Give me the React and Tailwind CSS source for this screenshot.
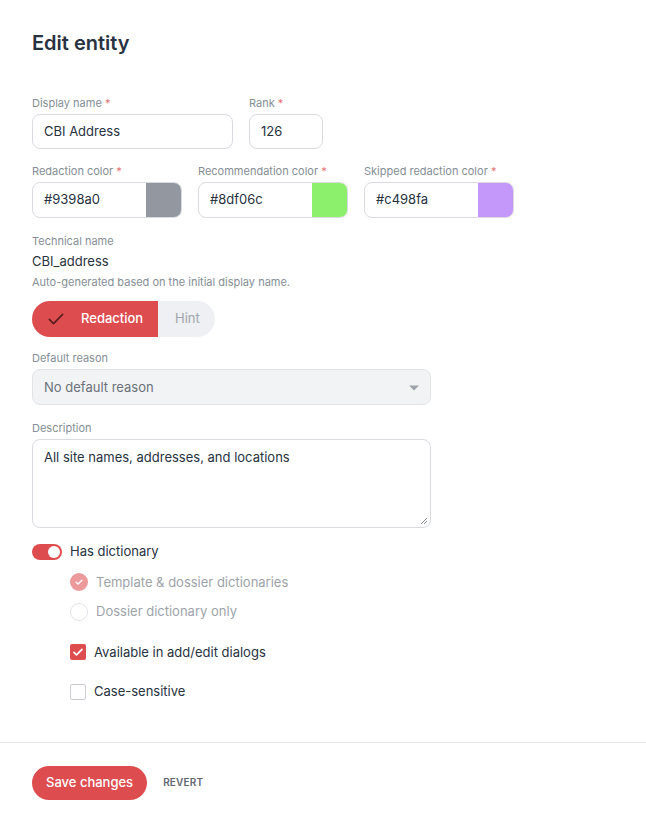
import React from "react";

const Label = ({ children, req }) => (
  <div className="text-[11px] leading-[14px] text-[#868e96] mb-[4px]">
    {children}
    {req && <span className="text-[#e57373]"> *</span>}
  </div>
);

const ColorField = ({ label, value, color }) => (
  <div className="w-[150px]">
    <Label req>{label}</Label>
    <div className="flex h-[36px] rounded-[8px] border border-[#d9dbe0] overflow-hidden">
      <div className="flex-1 flex items-center pl-[11px] text-[13px] text-[#283241]">{value}</div>
      <div className="w-[35px] h-full" style={{ background: color }} />
    </div>
  </div>
);

export default function App() {
  return (
    <div className="min-h-[823px] bg-white font-['Inter',sans-serif] text-[#283241]">
      <div className="px-8 pt-[30px]">
        <h1 className="text-[20px] font-semibold leading-[26px] text-[#283241]">Edit entity</h1>

        <div className="flex gap-4 mt-[40px]">
          <div className="w-[201px]">
            <Label req>Display name</Label>
            <div className="h-[35px] rounded-[8px] border border-[#d9dbe0] flex items-center pl-[11px] pt-[1px] text-[13px]">CBI Address</div>
          </div>
          <div className="w-[74px]">
            <Label req>Rank</Label>
            <div className="h-[35px] rounded-[8px] border border-[#d9dbe0] flex items-center pl-[11px] pt-[1px] text-[13px]">126</div>
          </div>
        </div>

        <div className="flex gap-4 mt-[15px]">
          <ColorField label="Redaction color" value="#9398a0" color="#9398a0" />
          <ColorField label="Recommendation color" value="#8df06c" color="#8df06c" />
          <ColorField label="Skipped redaction color" value="#c498fa" color="#c498fa" />
        </div>

        <div className="mt-[16px]">
          <div className="text-[11px] leading-[14px] text-[#868e96]">Technical name</div>
          <div className="text-[13px] leading-[16px] mt-[5px]">CBI_address</div>
          <div className="text-[11px] leading-[14px] text-[#868e96] mt-[6px]">Auto-generated based on the initial display name.</div>
        </div>

        <div className="flex mt-[12px] h-[36px] w-[183px] rounded-full overflow-hidden">
          <div className="w-[126px] bg-[#dd4d50] flex items-center">
            <svg width="20" height="20" viewBox="0 0 24 24" className="ml-[14px]">
              <path d="M4 12.5l5 5L20 6.5" fill="none" stroke="#5a1c1f" strokeWidth="2" strokeLinecap="round" strokeLinejoin="round" />
            </svg>
            <span className="ml-[15px] text-[13px] font-medium text-white">Redaction</span>
          </div>
          <div className="flex-1 bg-[#eef0f3] flex items-center pl-[17px] text-[13px] text-[#a0a5ad]">Hint</div>
        </div>

        <div className="mt-[14px] w-[399px]">
          <Label>Default reason</Label>
          <div className="h-[36px] rounded-[8px] border border-[#e2e4e8] bg-[#f2f3f5] flex items-center justify-between pl-[11px] pr-[10px] pt-[1px] text-[13px] text-[#6b717a]">
            <span>No default reason</span>
            <svg width="12" height="8" viewBox="0 0 12 8"><path d="M1 1.5h10L6 6.5z" fill="#9ea3aa" /></svg>
          </div>
        </div>

        <div className="mt-[16px] w-[399px]">
          <Label>Description</Label>
          <div className="relative h-[89px] rounded-[8px] border border-[#d9dbe0] pl-[11px] pt-[8px] text-[13px] leading-[18px]">
            All site names, addresses, and locations
            <svg width="8" height="8" viewBox="0 0 8 8" className="absolute right-[2px] bottom-[2px]">
              <path d="M7 1L1 7M7 4L4 7" stroke="#8a8f96" strokeWidth="1" />
            </svg>
          </div>
        </div>

        <div className="flex items-center mt-[14px]">
          <div className="w-[30px] h-[16px] rounded-full bg-[#dd4d50] relative">
            <div className="absolute right-[2px] top-[2px] w-[12px] h-[12px] rounded-full bg-white" />
          </div>
          <span className="ml-[8px] text-[13px]">Has dictionary</span>
        </div>

        <div className="ml-[38px] mt-[11px] flex flex-col gap-[10px]">
          <div className="flex items-center">
            <div className="w-[18px] h-[18px] rounded-full bg-[#ec9a9c] flex items-center justify-center">
              <svg width="10" height="10" viewBox="0 0 12 12"><path d="M2.5 6.2l2.3 2.3L9.5 3.8" fill="none" stroke="white" strokeWidth="1.6" strokeLinecap="round" strokeLinejoin="round" /></svg>
            </div>
            <span className="ml-[8px] text-[13px] text-[#9ea3aa]">Template &amp; dossier dictionaries</span>
          </div>
          <div className="flex items-center">
            <div className="w-[18px] h-[18px] rounded-full border border-[#e2e4e8] bg-white" />
            <span className="ml-[8px] text-[13px] text-[#9ea3aa]">Dossier dictionary only</span>
          </div>
        </div>

        <div className="ml-[38px] mt-[21px] flex flex-col gap-[20px]">
          <div className="flex items-center">
            <div className="w-[16px] h-[16px] rounded-[2px] bg-[#dd4d50] flex items-center justify-center">
              <svg width="12" height="12" viewBox="0 0 12 12"><path d="M2 6.3l2.5 2.5L10 3.3" fill="none" stroke="white" strokeWidth="1.7" strokeLinecap="round" strokeLinejoin="round" /></svg>
            </div>
            <span className="ml-[8px] text-[13px]">Available in add/edit dialogs</span>
          </div>
          <div className="flex items-center">
            <div className="w-[16px] h-[16px] rounded-[2px] border border-[#c9ccd1] bg-white" />
            <span className="ml-[8px] text-[13px]">Case-sensitive</span>
          </div>
        </div>
      </div>

      <div className="mt-[40px] border-t border-[#e4e6ea]" />

      <div className="px-8 pt-[23px] flex items-center">
        <button className="h-[34px] px-[14px] rounded-full bg-[#dd4d50] text-white text-[13px] font-medium">Save changes</button>
        <span className="ml-[16px] text-[10px] font-semibold text-[#5f6670] tracking-[0.2px]">REVERT</span>
      </div>
    </div>
  );
}
